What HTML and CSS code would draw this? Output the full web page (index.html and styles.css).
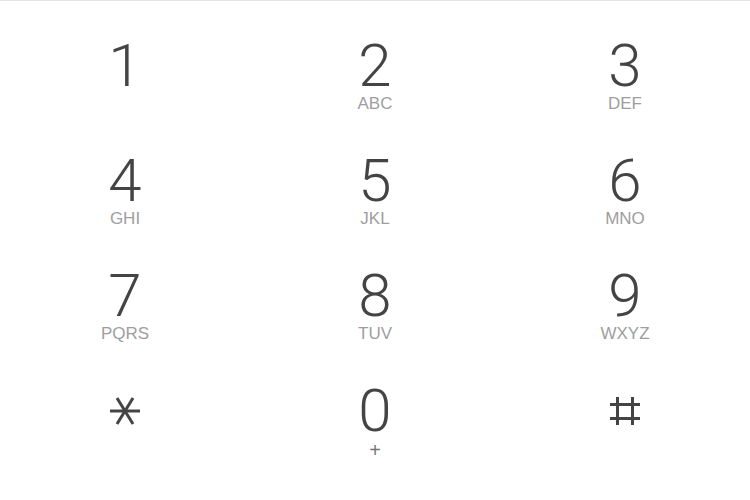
FILE: index.html
```html
<!DOCTYPE html>
<html>
<head>
<meta charset="utf-8">
<link rel="stylesheet" href="styles.css">
</head>
<body>
<div class="pad">
  <div class="key"><span class="digit">1</span><span class="letters"></span></div>
  <div class="key"><span class="digit">2</span><span class="letters">ABC</span></div>
  <div class="key"><span class="digit">3</span><span class="letters">DEF</span></div>
  <div class="key"><span class="digit">4</span><span class="letters">GHI</span></div>
  <div class="key"><span class="digit">5</span><span class="letters">JKL</span></div>
  <div class="key"><span class="digit">6</span><span class="letters">MNO</span></div>
  <div class="key"><span class="digit">7</span><span class="letters">PQRS</span></div>
  <div class="key"><span class="digit">8</span><span class="letters">TUV</span></div>
  <div class="key"><span class="digit">9</span><span class="letters">WXYZ</span></div>
  <div class="key">
    <span class="symbol">
      <svg width="32" height="30" viewBox="0 0 32 30"><g stroke="#444" stroke-width="3" fill="none"><line x1="1" y1="15" x2="31" y2="15"/><line x1="8" y1="2" x2="24" y2="28"/><line x1="24" y1="2" x2="8" y2="28"/></g></svg>
    </span>
  </div>
  <div class="key"><span class="digit">0</span><span class="letters plus">+</span></div>
  <div class="key">
    <span class="symbol">
      <svg width="32" height="30" viewBox="0 0 32 30"><g stroke="#444" stroke-width="3" fill="none"><line x1="8.5" y1="1" x2="8.5" y2="29"/><line x1="23.5" y1="1" x2="23.5" y2="29"/><line x1="1" y1="8.5" x2="31" y2="8.5"/><line x1="1" y1="22.5" x2="31" y2="22.5"/></g></svg>
    </span>
  </div>
</div>
</body>
</html>
```

FILE: styles.css
```css
html, body {
  margin: 0;
  padding: 0;
  background: #fff;
}
body {
  border-top: 1px solid #e3e3e3;
  width: 750px;
  height: 499px;
  overflow: hidden;
}
.pad {
  display: grid;
  grid-template-columns: repeat(3, 250px);
  grid-auto-rows: 115px;
  padding-top: 36px;
}
.key {
  display: flex;
  flex-direction: column;
  align-items: center;
}
.digit {
  font-family: Roboto, "Liberation Sans", sans-serif;
  font-weight: 300;
  font-size: 60px;
  line-height: 58px;
  color: #444;
}
.letters {
  font-family: "Liberation Sans", Arial, sans-serif;
  font-size: 17px;
  line-height: 17px;
  color: #9e9e9e;
}
.plus {
  color: #777;
  font-size: 20px;
  line-height: 20px;
}
.symbol {
  display: flex;
  margin-top: 14px;
}
```
